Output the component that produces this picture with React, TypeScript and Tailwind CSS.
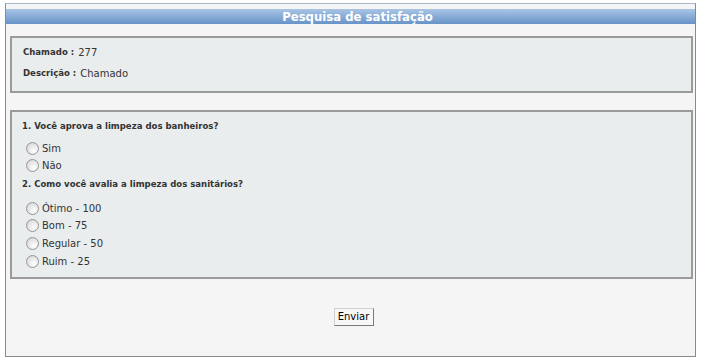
import React from "react";

const Radio = () => (
  <span className="inline-block w-[13px] h-[13px] rounded-full border border-[#969696] bg-[radial-gradient(circle_at_65%_70%,#ffffff_0%,#ececec_40%,#cfcfcf_100%)] shrink-0" />
);

const Option = ({ label, h }: { label: string; h: string }) => (
  <div className={`flex items-center ${h} pl-[4px]`}>
    <Radio />
    <span className="ml-[3px] text-[10px] text-[#333] [font-family:'DejaVu_Sans',Verdana,sans-serif]">{label}</span>
  </div>
);

const bold = "[font-family:'DejaVu_Sans_Condensed','DejaVu_Sans',Tahoma,sans-serif] font-bold text-[9.5px] text-[#333]";

export default function App() {
  return (
    <div className="bg-white w-[701px] h-[359px] pt-[3px] pl-[5px]">
      <div className="w-[691px] h-[354px] border border-[#8a8a8a] border-t-[#a9b9cc] bg-[#f5f5f5] pt-[5px]">
        <div className="h-[15px] bg-gradient-to-b from-[#a9c5e5] to-[#6893c8] flex items-center justify-center pl-[14px]">
          <span className="text-white font-bold text-[13px] leading-[15px] [font-family:'DejaVu_Sans_Condensed','DejaVu_Sans',Tahoma,sans-serif]">
            Pesquisa de satisfação
          </span>
        </div>
        <div className="mt-[12px] ml-[4px] w-[683px] h-[57px] border-2 border-[#9a9a9a] bg-[#e9edee] pt-[6px] pl-[11px]">
          <div className="h-[16px] flex items-center">
            <span className={bold}>Chamado :</span>
            <span className="ml-[4px] text-[10px] text-[#333] [font-family:'DejaVu_Sans',Verdana,sans-serif]">277</span>
          </div>
          <div className="h-[16px] mt-[5px] flex items-center">
            <span className={bold}>Descrição :</span>
            <span className="ml-[4px] text-[10px] text-[#333] [font-family:'DejaVu_Sans',Verdana,sans-serif]">Chamado</span>
          </div>
        </div>
        <div className="mt-[17px] ml-[4px] w-[683px] h-[169px] border-2 border-[#9a9a9a] bg-[#e9edee] pt-[6px] pl-[10px]">
          <div className="h-[16px] flex items-center">
            <span className={bold}>1. Você aprova a limpeza dos banheiros?</span>
          </div>
          <div className="mt-[5px]">
            <Option label="Sim" h="h-[18px]" />
            <Option label="Não" h="h-[17px]" />
          </div>
          <div className="h-[16px] mt-[2px] flex items-center">
            <span className={bold}>2. Como você avalia a limpeza dos sanitários?</span>
          </div>
          <div className="mt-[7px]">
            <Option label="Ótimo - 100" h="h-[18px]" />
            <Option label="Bom - 75" h="h-[17px]" />
            <Option label="Regular - 50" h="h-[18px]" />
            <Option label="Ruim - 25" h="h-[18px]" />
          </div>
        </div>
        <div className="mt-[29px] flex justify-center pl-[6px]">
          <button className="w-[40px] h-[18px] border border-[#7a7a7a] border-t-[#d0d0d0] border-l-[#d0d0d0] bg-[#f7f7f7] text-[10px] text-black leading-none [font-family:'DejaVu_Sans',Verdana,sans-serif]">
            Enviar
          </button>
        </div>
      </div>
    </div>
  );
}
